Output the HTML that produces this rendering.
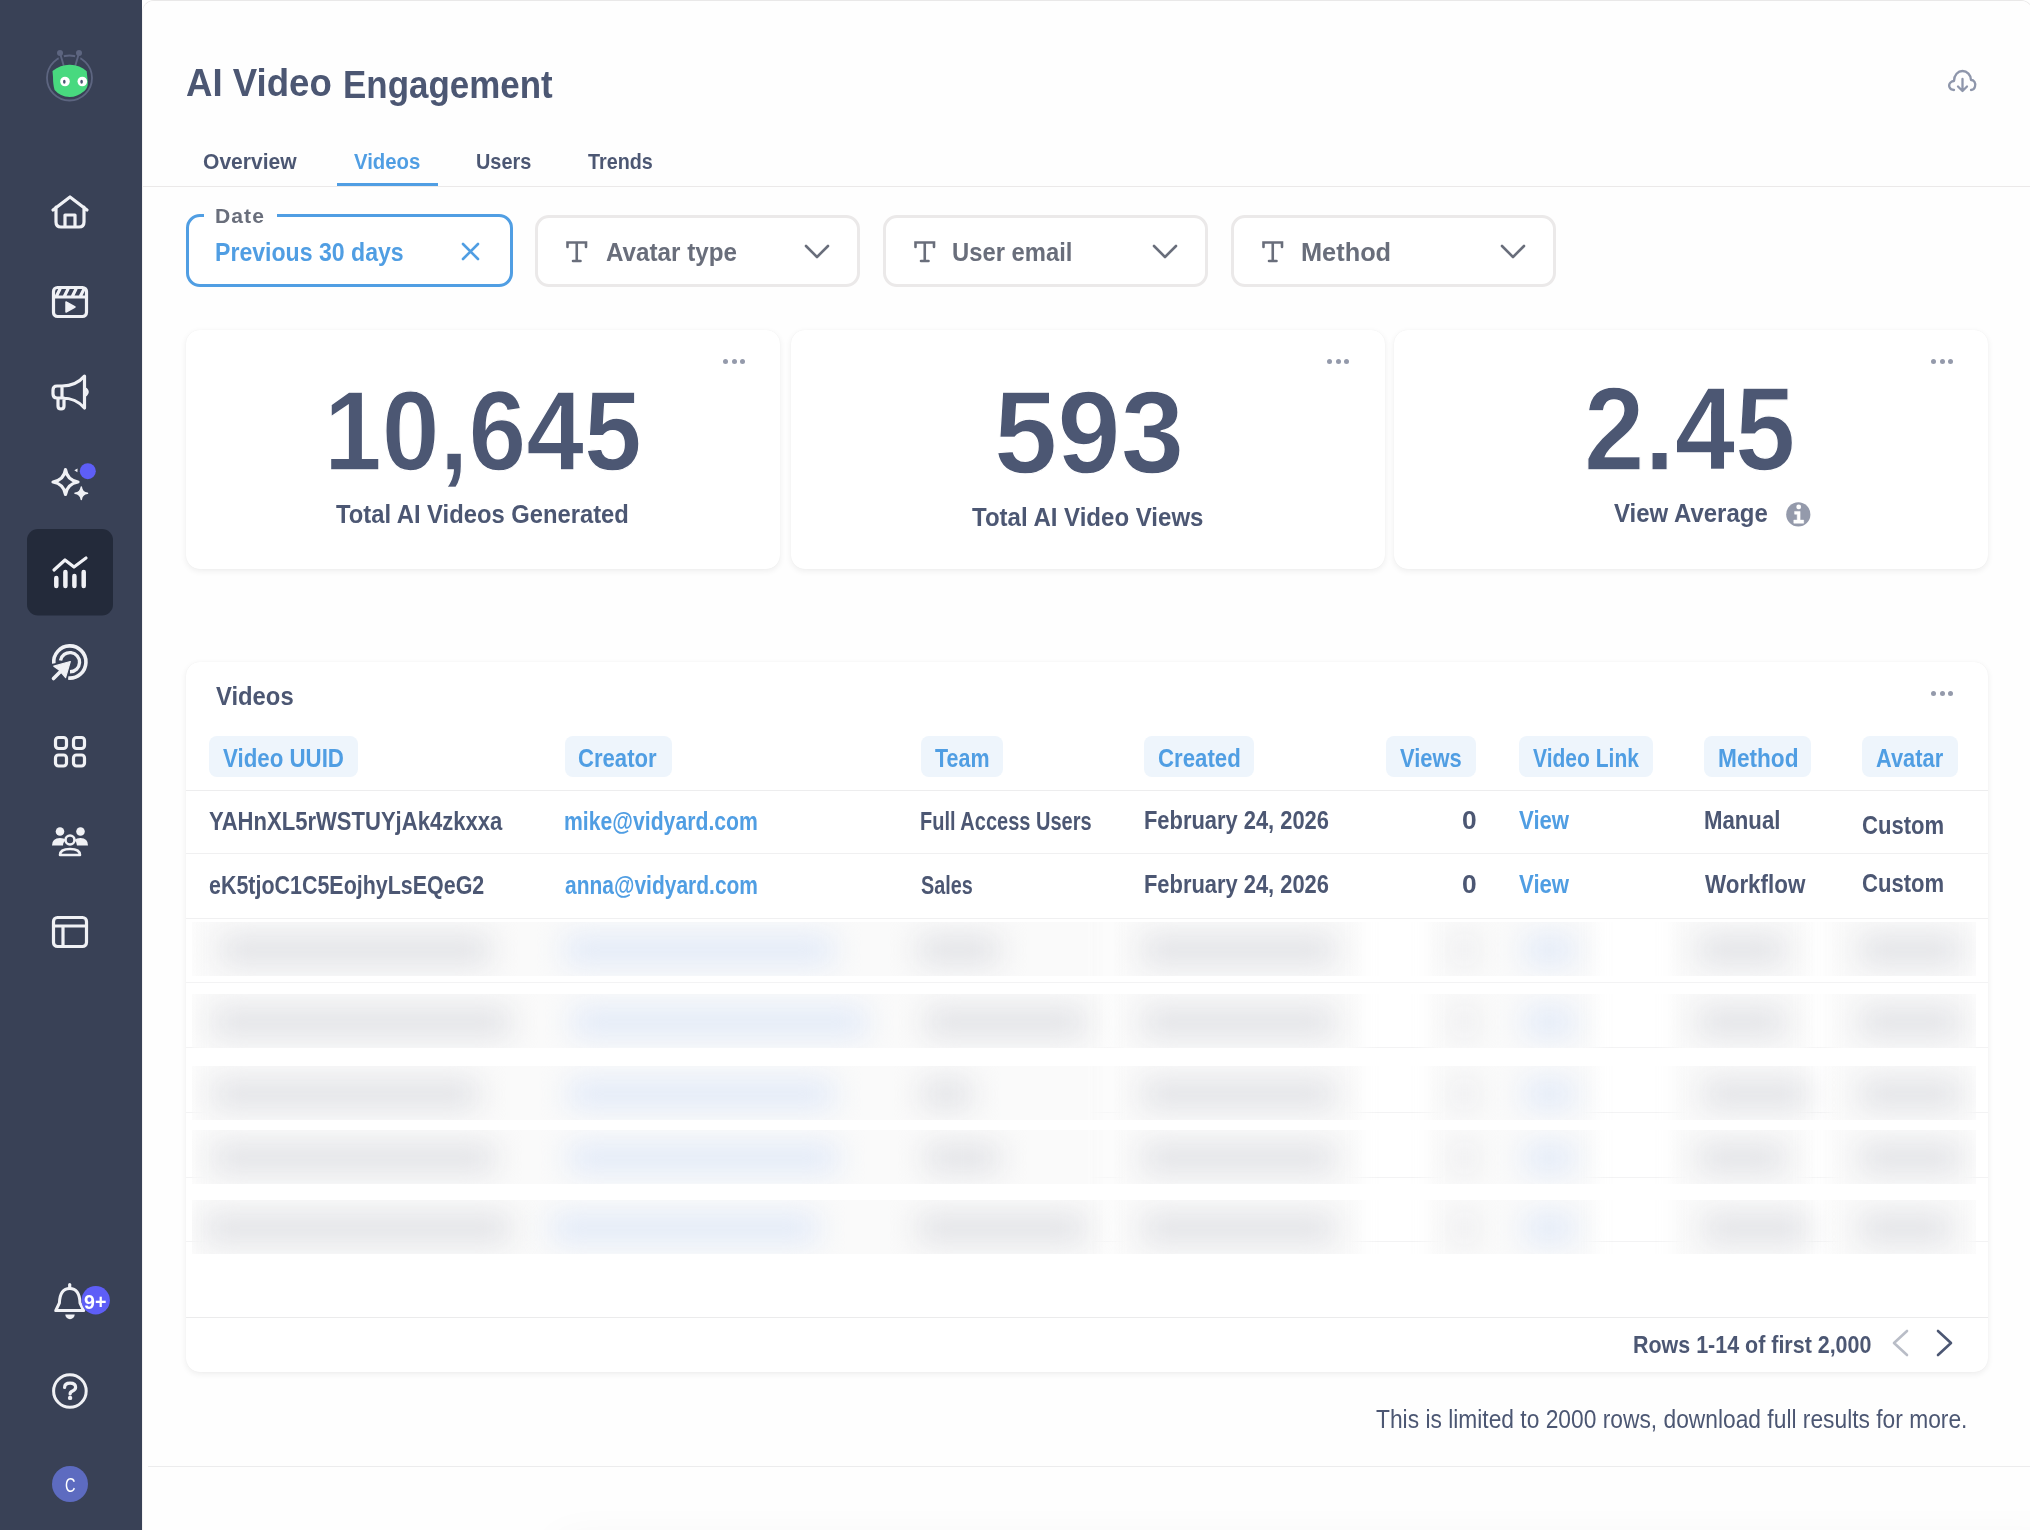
<!DOCTYPE html>
<html><head><meta charset="utf-8"><style>
html,body{margin:0;padding:0;width:2030px;height:1530px;overflow:hidden;background:#fff;font-family:"Liberation Sans",sans-serif;}
.tx{position:absolute;white-space:nowrap;transform-origin:0 0;}
.abs{position:absolute;}
#sb{position:absolute;left:0;top:0;width:142px;height:1530px;background:#394156;}
#main{position:absolute;left:142px;top:0;width:1891px;height:1540px;background:#fefefe;border-top:1px solid #e9e8e8;border-left:1px solid #f2f1f1;border-right:1px solid #ebeaea;border-radius:12px 12px 0 0;box-sizing:border-box;overflow:hidden}
#head{position:absolute;left:0;top:0;width:100%;height:185px;background:#fefefe;border-bottom:1px solid #ebe9e9;}
.flt{position:absolute;top:215px;height:72px;width:325px;box-sizing:border-box;border:3px solid #ebe9e9;border-radius:14px;background:#fff}
.card{position:absolute;background:#fff;border-radius:14px;box-shadow:0 2px 6px rgba(0,0,0,0.07),0 0 1px rgba(0,0,0,0.06);}
.pill{position:absolute;top:736px;height:41px;background:#eef5fc;border-radius:8px;}
.dots{position:absolute;width:22px;height:5px;}
.dots i{position:absolute;top:0;width:5px;height:5px;border-radius:50%;background:#949aab;}
.hl{position:absolute;height:1px;background:#f0f0f1;}
.band{position:absolute;overflow:hidden;}
.band b{position:absolute;top:-30px;bottom:-30px;background:#fafafa;filter:blur(10px);}
.band i{position:absolute;top:14px;height:28px;background:#e0e1e5;filter:blur(15px);}
.band i.b{background:#e0e9f8}
</style></head><body>
<div id="sb"><svg style="position:absolute;left:0;top:0" width="142" height="1530" viewBox="0 0 142 1530" fill="none" stroke="#f0f1f5" stroke-width="3.2" stroke-linecap="round" stroke-linejoin="round">
 <!-- logo -->
 <circle cx="69.5" cy="78" r="22.5" stroke="#5d6580" stroke-width="1.8"/>
 <path d="M60 53 L63.5 65 M79 53 L75.5 65" stroke="#394156" stroke-width="5.5"/>
 <path d="M60 53 L63.5 65 M79 53 L75.5 65" stroke="#5d6580" stroke-width="1.9"/>
 <circle cx="60" cy="53" r="3" fill="#5d6580" stroke="none"/><circle cx="79" cy="53" r="3" fill="#5d6580" stroke="none"/>
 <path d="M52.5 71 Q61 64.5 70 64.8 Q80 65.2 86.7 71.3 L87.8 82 Q88 88 84.4 91 Q77 97 69.7 97 Q60 96.5 54.6 90 Q53 85 53 77 Z" fill="#48d97f" stroke="none"/>
 <circle cx="65" cy="81.5" r="4.8" fill="#fff" stroke="none"/><circle cx="82.3" cy="81.5" r="4.8" fill="#fff" stroke="none"/>
 <ellipse cx="64.3" cy="81.8" rx="1.3" ry="2" fill="#4c5773" stroke="none"/><ellipse cx="81.6" cy="81.8" rx="1.3" ry="2" fill="#4c5773" stroke="none"/>
 <!-- home -->
 <path d="M53 210 L70 197 L87 210 M56 207 V222 Q56 227 61 227 H79 Q84 227 84 222 V207 M65 227 V215 H75 V227"/>
 <!-- video -->
 <rect x="53.5" y="287.5" width="33" height="29" rx="4"/>
 <path d="M53.5 297 H86.5 M60 289 L56.5 296 M68 289 L64.5 296 M76 289 L72.5 296 M84 289 L80.5 296"/>
 <path d="M66 302 L75 307 L66 312 Z" fill="#f0f1f5" stroke-width="1.5"/>
 <!-- megaphone -->
 <path d="M84.5 376 Q76 386 62 386 H57 Q53 386 53 390 V394 Q53 398 57 398 H62 Q76 398 84.5 408 Z M62 386 V398 M58 398 V406 Q58 409 61 409 Q64 409 64 406 V398"/>
 <path d="M86 389 Q89 392 86 395" stroke-width="2.5"/>
 <!-- sparkle -->
 <path d="M65.5 469.5 Q67 480 78 482 Q67 484 65.5 494.5 Q64 484 53 482 Q64 480 65.5 469.5 Z"/>
 <path d="M81.3 487 Q82 492.5 87.5 493.3 Q82 494 81.3 499.5 Q80.5 494 75 493.3 Q80.5 492.5 81.3 487 Z" fill="#f0f1f5" stroke-width="1.5"/>
 <path d="M74.3 470.3 L77.6 468.6 L77.4 472.3 Z" fill="#f0f1f5" stroke="none"/>
 <circle cx="87.8" cy="471.2" r="8" fill="#5e5ef7" stroke="none"/>
 <!-- active bg -->
 <rect x="27" y="529" width="86" height="86.5" rx="11" fill="#232a3a" stroke="none"/>
 <!-- chart -->
 <path d="M54 570 L65 560 L74 567 L86 558"/>
 <path d="M56.3 578 V586 M65.4 572 V586 M74.4 576 V586 M83.7 572 V586" stroke-width="4.5"/>
 <!-- target -->
 <path d="M53.8 663.5 A16.1 16.1 0 1 1 68.2 678" stroke-width="3.6" stroke-linecap="butt"/>
 <path d="M60.5 660.5 A9.6 9.6 0 1 1 70 671.8" stroke-width="3.4" stroke-linecap="butt"/>
 <path d="M70.3 661.5 L53.8 666.2 L58.8 669.7 L65.6 677.6 Z" fill="#394156" stroke="#394156" stroke-width="4"/>
 <path d="M53.5 678.5 L61 671" stroke-width="3.6"/>
 <path d="M70.3 661.5 L53.8 666.2 L58.8 669.7 L65.6 677.6 Z" fill="#f0f1f5" stroke-width="1.2"/>
 <!-- grid -->
 <rect x="55.5" y="737.5" width="11" height="11" rx="3"/><rect x="73.5" y="737.5" width="11" height="11" rx="3"/>
 <rect x="55.5" y="755" width="11" height="11" rx="3"/><rect x="73.5" y="755" width="11" height="11" rx="3"/>
 <!-- people -->
 <circle cx="60" cy="831.5" r="4.3" fill="#f0f1f5" stroke="none"/><circle cx="80.5" cy="831.5" r="4.3" fill="#f0f1f5" stroke="none"/>
 <path d="M52 845.5 Q52 838 60 838 Q64 838 66 840 Q63 842 63 845.5 Z M88 845.5 Q88 838 80.5 838 Q76.5 838 74.5 840 Q77 842 77 845.5 Z" fill="#f0f1f5" stroke="none"/>
 <circle cx="70" cy="840" r="4.5" stroke-width="2.6"/>
 <path d="M60 855 Q60 849 70 849 Q80 849 80 855 Z" stroke-width="2.6"/>
 <!-- layout -->
 <rect x="53.5" y="917.5" width="33" height="29" rx="4"/>
 <path d="M53.5 926 H86.5 M63 926 V946.5"/>
 <!-- bell -->
 <path d="M69.7 1284.5 V1288" stroke-width="3.2"/>
 <path d="M55.7 1310.6 H83.7 L80 1303 Q79.5 1288.6 69.7 1288.6 Q60 1288.6 59.4 1303 Z" stroke-width="3"/>
 <path d="M65.3 1314.5 A4.7 4.7 0 0 0 74.7 1314.5 Z" fill="#f0f1f5" stroke="none"/>
 <circle cx="95.7" cy="1300.3" r="14.2" fill="#5e5ef7" stroke="none"/>
 <!-- help -->
 <circle cx="69.9" cy="1391" r="16.3" stroke-width="3"/>
 <path d="M64.6 1387.5 Q64.6 1383.2 70.1 1383.2 Q75.6 1383.2 75.6 1387.3 Q75.6 1389.8 72.6 1391 Q70.1 1392 70.1 1394" stroke-width="3.2"/>
 <circle cx="70.1" cy="1397.9" r="2.2" fill="#f0f1f5" stroke="none"/>
 <!-- avatar -->
 <circle cx="70" cy="1484" r="18" fill="#5d6bc0" stroke="none"/>
</svg>
</div>
<div id="main">
  <div id="head"></div>
</div>
<!-- download icon -->
<svg class="abs" style="left:1946px;top:66px" width="32" height="30" viewBox="0 0 32 30" fill="none" stroke="#8e96ab" stroke-width="2.3" stroke-linecap="round" stroke-linejoin="round">
  <path d="M8 24 C3 24 2 19 4.5 16.5 C6 15 8 15 8 15 C8 9 12 5 16.5 5 C21 5 25 9 25 14 C28 14 30 17 29 20.5 C28.5 22.5 27 24 25 24"/>
  <path d="M16.5 13 V25 M12 20.5 L16.5 25 L21 20.5"/>
</svg>
<!-- tab underline -->
<div class="abs" style="left:337px;top:183px;width:101px;height:3px;background:#509ee3"></div>
<!-- filters -->
<div class="flt" style="left:186px;top:214px;width:327px;height:73px;border:3px solid #509ee3;"></div>
<div class="abs" style="left:204px;top:205px;width:73px;height:14px;background:#fefefe"></div>
<svg class="abs" style="left:459px;top:240px" width="23" height="23" viewBox="0 0 23 23" stroke="#509ee3" stroke-width="2.6" stroke-linecap="round"><path d="M4 4 L19 19 M19 4 L4 19"/></svg>
<div class="flt" style="left:535px"></div>
<div class="flt" style="left:883px"></div>
<div class="flt" style="left:1231px"></div>
<svg class="abs" style="left:565px;top:240px" width="24" height="24" viewBox="0 0 24 24" fill="none" stroke="#696e7b" stroke-width="2.6" stroke-linecap="round"><path d="M2.5 7 V2.5 H21 V7 M11.75 2.5 V21 M8 21 H15.5"/></svg>
<svg class="abs" style="left:803px;top:243px" width="28" height="18" viewBox="0 0 28 18" fill="none" stroke="#696e7b" stroke-width="2.6" stroke-linecap="round" stroke-linejoin="round"><path d="M3 3 L14 14 L25 3"/></svg>
<svg class="abs" style="left:913px;top:240px" width="24" height="24" viewBox="0 0 24 24" fill="none" stroke="#696e7b" stroke-width="2.6" stroke-linecap="round"><path d="M2.5 7 V2.5 H21 V7 M11.75 2.5 V21 M8 21 H15.5"/></svg>
<svg class="abs" style="left:1151px;top:243px" width="28" height="18" viewBox="0 0 28 18" fill="none" stroke="#696e7b" stroke-width="2.6" stroke-linecap="round" stroke-linejoin="round"><path d="M3 3 L14 14 L25 3"/></svg>
<svg class="abs" style="left:1261px;top:240px" width="24" height="24" viewBox="0 0 24 24" fill="none" stroke="#696e7b" stroke-width="2.6" stroke-linecap="round"><path d="M2.5 7 V2.5 H21 V7 M11.75 2.5 V21 M8 21 H15.5"/></svg>
<svg class="abs" style="left:1499px;top:243px" width="28" height="18" viewBox="0 0 28 18" fill="none" stroke="#696e7b" stroke-width="2.6" stroke-linecap="round" stroke-linejoin="round"><path d="M3 3 L14 14 L25 3"/></svg>
<!-- cards -->
<div class="card" style="left:186px;top:330px;width:594px;height:239px"></div>
<div class="card" style="left:791px;top:330px;width:594px;height:239px"></div>
<div class="card" style="left:1394px;top:330px;width:594px;height:239px"></div>
<div class="dots" style="left:723px;top:359px"><i style="left:0"></i><i style="left:8.7px"></i><i style="left:17.4px"></i></div>
<div class="dots" style="left:1327px;top:359px"><i style="left:0"></i><i style="left:8.7px"></i><i style="left:17.4px"></i></div>
<div class="dots" style="left:1931px;top:359px"><i style="left:0"></i><i style="left:8.7px"></i><i style="left:17.4px"></i></div>
<svg class="abs" style="left:1785.6px;top:501.8px" width="25" height="25" viewBox="0 0 25 25"><circle cx="12.3" cy="12.4" r="12.1" fill="#949aab"/><circle cx="12.7" cy="4.9" r="2.4" fill="#fff"/><path d="M8.6 9.4 H14.1 V18.1 H17.7 V21.2 H7.8 V18.1 H11.2 V12.2 H8.6 Z" fill="#fff" stroke="#fff" stroke-width="0.5" stroke-linejoin="round"/></svg>
<!-- table card -->
<div class="card" style="left:186px;top:662px;width:1802px;height:710px"></div>
<div class="dots" style="left:1931px;top:691px"><i style="left:0"></i><i style="left:8.7px"></i><i style="left:17.4px"></i></div>
<div class="pill" style="left:209px;width:148.7px"></div>
<div class="pill" style="left:565px;width:106.7px"></div>
<div class="pill" style="left:921px;width:81.6px"></div>
<div class="pill" style="left:1144px;width:109.5px"></div>
<div class="pill" style="left:1386.3px;width:89.4px"></div>
<div class="pill" style="left:1519px;width:134.4px"></div>
<div class="pill" style="left:1703.8px;width:107.7px"></div>
<div class="pill" style="left:1861.9px;width:95.7px"></div>
<div class="hl" style="left:186px;top:790px;width:1802px;background:#ededee"></div>
<div class="hl" style="left:186px;top:853px;width:1802px"></div>
<div class="hl" style="left:186px;top:918px;width:1802px"></div>
<div class="hl" style="left:186px;top:982px;width:1802px;background:#f3f3f4"></div>
<div class="hl" style="left:186px;top:1047px;width:1802px;background:#f3f3f4"></div>
<div class="hl" style="left:186px;top:1112px;width:1802px;background:#f3f3f4"></div>
<div class="hl" style="left:186px;top:1177px;width:1802px;background:#f3f3f4"></div>
<div class="hl" style="left:186px;top:1241px;width:1802px;background:#f3f3f4"></div>
<div class="band" style="left:192px;top:922px;width:1784px;height:54px"><b style="left:0px;width:913px"></b><b style="left:918px;width:252px"></b><b style="left:1236px;width:168px"></b><b style="left:1480px;width:138px"></b><b style="left:1636px;width:148px"></b><i class="g" style="left:28px;width:271px"></i><i class="b" style="left:372px;width:270px"></i><i class="g" style="left:725px;width:83px"></i><i class="g" style="left:950px;width:193px"></i><i class="g" style="left:1265px;width:15px"></i><i class="b" style="left:1332px;width:51px"></i><i class="g" style="left:1505px;width:89px"></i><i class="g" style="left:1667px;width:103px"></i></div>
<div class="band" style="left:192px;top:994px;width:1784px;height:54px"><b style="left:0px;width:913px"></b><b style="left:918px;width:252px"></b><b style="left:1236px;width:168px"></b><b style="left:1480px;width:138px"></b><b style="left:1636px;width:148px"></b><i class="g" style="left:20px;width:299px"></i><i class="b" style="left:380px;width:295px"></i><i class="g" style="left:733px;width:161px"></i><i class="g" style="left:950px;width:193px"></i><i class="g" style="left:1265px;width:15px"></i><i class="b" style="left:1332px;width:51px"></i><i class="g" style="left:1505px;width:89px"></i><i class="g" style="left:1667px;width:103px"></i></div>
<div class="band" style="left:192px;top:1066px;width:1784px;height:54px"><b style="left:0px;width:913px"></b><b style="left:918px;width:252px"></b><b style="left:1236px;width:168px"></b><b style="left:1480px;width:138px"></b><b style="left:1636px;width:148px"></b><i class="g" style="left:20px;width:267px"></i><i class="b" style="left:376px;width:266px"></i><i class="g" style="left:729px;width:51px"></i><i class="g" style="left:950px;width:193px"></i><i class="g" style="left:1265px;width:15px"></i><i class="b" style="left:1332px;width:51px"></i><i class="g" style="left:1511px;width:106px"></i><i class="g" style="left:1667px;width:103px"></i></div>
<div class="band" style="left:192px;top:1130px;width:1784px;height:54px"><b style="left:0px;width:913px"></b><b style="left:918px;width:252px"></b><b style="left:1236px;width:168px"></b><b style="left:1480px;width:138px"></b><b style="left:1636px;width:148px"></b><i class="g" style="left:20px;width:283px"></i><i class="b" style="left:376px;width:270px"></i><i class="g" style="left:733px;width:75px"></i><i class="g" style="left:950px;width:193px"></i><i class="g" style="left:1265px;width:15px"></i><i class="b" style="left:1332px;width:51px"></i><i class="g" style="left:1505px;width:89px"></i><i class="g" style="left:1667px;width:103px"></i></div>
<div class="band" style="left:192px;top:1200px;width:1784px;height:54px"><b style="left:0px;width:913px"></b><b style="left:918px;width:252px"></b><b style="left:1236px;width:168px"></b><b style="left:1480px;width:138px"></b><b style="left:1636px;width:148px"></b><i class="g" style="left:12px;width:307px"></i><i class="b" style="left:359px;width:267px"></i><i class="g" style="left:725px;width:169px"></i><i class="g" style="left:950px;width:193px"></i><i class="g" style="left:1265px;width:15px"></i><i class="b" style="left:1332px;width:51px"></i><i class="g" style="left:1511px;width:106px"></i><i class="g" style="left:1667px;width:93px"></i></div>
<div class="hl" style="left:186px;top:1317px;width:1802px;background:#ebebec"></div>
<svg class="abs" style="left:1888px;top:1328px" width="70" height="30" viewBox="0 0 70 30" fill="none" stroke-width="2.6" stroke-linecap="round" stroke-linejoin="round">
 <path d="M19 3 L6 15 L19 27" stroke="#b9bdc7"/><path d="M50 3 L63 15 L50 27" stroke="#4c5773"/></svg>
<div class="hl" style="left:148px;top:1466px;width:1882px;background:#ececed"></div>
<div class="abs" style="left:560px;top:1545px;width:1500px;height:30px;border-radius:20px;box-shadow:0 0 40px 10px rgba(0,0,0,0.035)"></div>
<div class="tx" style="left:186.40px;top:64.33px;font-size:38px;line-height:38px;font-weight:700;color:#4c5773;letter-spacing:0px;transform:scaleX(0.9632);">AI Video</div>
<div class="tx" style="left:342.86px;top:66.43px;font-size:38px;line-height:38px;font-weight:700;color:#4c5773;letter-spacing:0px;transform:scaleX(0.9192);">Engagement</div>
<div class="tx" style="left:203.40px;top:150.72px;font-size:22.3px;line-height:22.3px;font-weight:700;color:#4c5773;letter-spacing:0px;transform:scaleX(0.9447);">Overview</div>
<div class="tx" style="left:354.00px;top:150.72px;font-size:22.3px;line-height:22.3px;font-weight:700;color:#509ee3;letter-spacing:0px;transform:scaleX(0.9128);">Videos</div>
<div class="tx" style="left:476.11px;top:150.72px;font-size:22.3px;line-height:22.3px;font-weight:700;color:#4c5773;letter-spacing:0px;transform:scaleX(0.8914);">Users</div>
<div class="tx" style="left:587.60px;top:150.72px;font-size:22.3px;line-height:22.3px;font-weight:700;color:#4c5773;letter-spacing:0px;transform:scaleX(0.8858);">Trends</div>
<div class="tx" style="left:215.25px;top:205.77px;font-size:20px;line-height:20px;font-weight:700;color:#696e7b;letter-spacing:1px;transform:scaleX(1.0547);">Date</div>
<div class="tx" style="left:214.60px;top:239.86px;font-size:25.8px;line-height:25.8px;font-weight:700;color:#509ee3;letter-spacing:0px;transform:scaleX(0.8952);">Previous 30 days</div>
<div class="tx" style="left:605.90px;top:240.43px;font-size:25px;line-height:25px;font-weight:700;color:#696e7b;letter-spacing:0px;transform:scaleX(0.9687);">Avatar type</div>
<div class="tx" style="left:952.45px;top:240.43px;font-size:25px;line-height:25px;font-weight:700;color:#696e7b;letter-spacing:0px;transform:scaleX(0.9525);">User email</div>
<div class="tx" style="left:1300.69px;top:240.43px;font-size:25px;line-height:25px;font-weight:700;color:#696e7b;letter-spacing:0px;transform:scaleX(1.0139);">Method</div>
<div class="tx" style="left:323.53px;top:375.35px;font-size:112.5px;line-height:112.5px;font-weight:900;color:#4c5773;letter-spacing:0px;transform:scaleX(0.9237);-webkit-text-stroke:1.3px #fff;">10,645</div>
<div class="tx" style="left:336.00px;top:501.86px;font-size:25.8px;line-height:25.8px;font-weight:700;color:#4c5773;letter-spacing:0px;transform:scaleX(0.9215);">Total AI Videos Generated</div>
<div class="tx" style="left:994.09px;top:373.90px;font-size:117.4px;line-height:117.4px;font-weight:900;color:#4c5773;letter-spacing:0px;transform:scaleX(0.9706);-webkit-text-stroke:1.3px #fff;">593</div>
<div class="tx" style="left:972.00px;top:504.86px;font-size:25.8px;line-height:25.8px;font-weight:700;color:#4c5773;letter-spacing:0px;transform:scaleX(0.9314);">Total AI Video Views</div>
<div class="tx" style="left:1583.81px;top:370.56px;font-size:117.8px;line-height:117.8px;font-weight:900;color:#4c5773;letter-spacing:0px;transform:scaleX(0.9225);-webkit-text-stroke:1.3px #fff;">2.45</div>
<div class="tx" style="left:1613.70px;top:501.26px;font-size:25.8px;line-height:25.8px;font-weight:700;color:#4c5773;letter-spacing:0px;transform:scaleX(0.9295);">View Average</div>
<div class="tx" style="left:216.00px;top:682.66px;font-size:26.5px;line-height:26.5px;font-weight:700;color:#4c5773;letter-spacing:0px;transform:scaleX(0.8988);">Videos</div>
<div class="tx" style="left:223.00px;top:745.53px;font-size:25px;line-height:25px;font-weight:700;color:#509ee3;letter-spacing:0px;transform:scaleX(0.8914);">Video UUID</div>
<div class="tx" style="left:577.92px;top:745.53px;font-size:25px;line-height:25px;font-weight:700;color:#509ee3;letter-spacing:0px;transform:scaleX(0.8845);">Creator</div>
<div class="tx" style="left:934.60px;top:745.53px;font-size:25px;line-height:25px;font-weight:700;color:#509ee3;letter-spacing:0px;transform:scaleX(0.8582);">Team</div>
<div class="tx" style="left:1157.71px;top:745.53px;font-size:25px;line-height:25px;font-weight:700;color:#509ee3;letter-spacing:0px;transform:scaleX(0.8886);">Created</div>
<div class="tx" style="left:1400.00px;top:745.53px;font-size:25px;line-height:25px;font-weight:700;color:#509ee3;letter-spacing:0px;transform:scaleX(0.8775);">Views</div>
<div class="tx" style="left:1533.00px;top:745.53px;font-size:25px;line-height:25px;font-weight:700;color:#509ee3;letter-spacing:0px;transform:scaleX(0.8409);">Video Link</div>
<div class="tx" style="left:1717.59px;top:745.53px;font-size:25px;line-height:25px;font-weight:700;color:#509ee3;letter-spacing:0px;transform:scaleX(0.9065);">Method</div>
<div class="tx" style="left:1875.60px;top:745.53px;font-size:25px;line-height:25px;font-weight:700;color:#509ee3;letter-spacing:0px;transform:scaleX(0.8735);">Avatar</div>
<div class="tx" style="left:208.50px;top:808.53px;font-size:25px;line-height:25px;font-weight:700;color:#4c5773;letter-spacing:0px;transform:scaleX(0.8818);">YAHnXL5rWSTUYjAk4zkxxa</div>
<div class="tx" style="left:564.15px;top:808.53px;font-size:25px;line-height:25px;font-weight:700;color:#509ee3;letter-spacing:0px;transform:scaleX(0.8480);">mike@vidyard.com</div>
<div class="tx" style="left:920.20px;top:808.53px;font-size:25px;line-height:25px;font-weight:700;color:#4c5773;letter-spacing:0px;transform:scaleX(0.8000);">Full Access Users</div>
<div class="tx" style="left:1143.52px;top:808.23px;font-size:25px;line-height:25px;font-weight:700;color:#4c5773;letter-spacing:0px;transform:scaleX(0.8756);">February 24, 2026</div>
<div class="tx" style="left:1462.00px;top:808.23px;font-size:25px;line-height:25px;font-weight:700;color:#4c5773;letter-spacing:0px;transform:scaleX(1.0538);">0</div>
<div class="tx" style="left:1519.00px;top:808.23px;font-size:25px;line-height:25px;font-weight:700;color:#509ee3;letter-spacing:0px;transform:scaleX(0.8866);">View</div>
<div class="tx" style="left:1703.81px;top:808.23px;font-size:25px;line-height:25px;font-weight:700;color:#4c5773;letter-spacing:0px;transform:scaleX(0.8874);">Manual</div>
<div class="tx" style="left:1861.92px;top:812.83px;font-size:25px;line-height:25px;font-weight:700;color:#4c5773;letter-spacing:0px;transform:scaleX(0.8830);">Custom</div>
<div class="tx" style="left:208.50px;top:873.33px;font-size:25px;line-height:25px;font-weight:700;color:#4c5773;letter-spacing:0px;transform:scaleX(0.8577);">eK5tjoC1C5EojhyLsEQeG2</div>
<div class="tx" style="left:565.00px;top:873.33px;font-size:25px;line-height:25px;font-weight:700;color:#509ee3;letter-spacing:0px;transform:scaleX(0.8392);">anna@vidyard.com</div>
<div class="tx" style="left:921.00px;top:873.33px;font-size:25px;line-height:25px;font-weight:700;color:#4c5773;letter-spacing:0px;transform:scaleX(0.7916);">Sales</div>
<div class="tx" style="left:1143.52px;top:872.33px;font-size:25px;line-height:25px;font-weight:700;color:#4c5773;letter-spacing:0px;transform:scaleX(0.8756);">February 24, 2026</div>
<div class="tx" style="left:1462.00px;top:872.33px;font-size:25px;line-height:25px;font-weight:700;color:#4c5773;letter-spacing:0px;transform:scaleX(1.0538);">0</div>
<div class="tx" style="left:1519.00px;top:872.33px;font-size:25px;line-height:25px;font-weight:700;color:#509ee3;letter-spacing:0px;transform:scaleX(0.8866);">View</div>
<div class="tx" style="left:1704.70px;top:872.33px;font-size:25px;line-height:25px;font-weight:700;color:#4c5773;letter-spacing:0px;transform:scaleX(0.8953);">Workflow</div>
<div class="tx" style="left:1861.92px;top:870.93px;font-size:25px;line-height:25px;font-weight:700;color:#4c5773;letter-spacing:0px;transform:scaleX(0.8830);">Custom</div>
<div class="tx" style="left:84.00px;top:1292.37px;font-size:20px;line-height:20px;font-weight:700;color:#fff;letter-spacing:0px;transform:scaleX(0.9809);">9+</div>
<div class="tx" style="left:64.90px;top:1475.69px;font-size:19.5px;line-height:19.5px;font-weight:400;color:#fff;letter-spacing:0px;transform:scaleX(0.7429);">C</div>
<div class="tx" style="left:1632.91px;top:1333.18px;font-size:24px;line-height:24px;font-weight:700;color:#4c5773;letter-spacing:0px;transform:scaleX(0.8937);">Rows 1-14 of first 2,000</div>
<div class="tx" style="left:1376.30px;top:1406.83px;font-size:25px;line-height:25px;font-weight:400;color:#4c5773;letter-spacing:0px;transform:scaleX(0.9115);">This is limited to 2000 rows, download full results for more.</div>
</body></html>
